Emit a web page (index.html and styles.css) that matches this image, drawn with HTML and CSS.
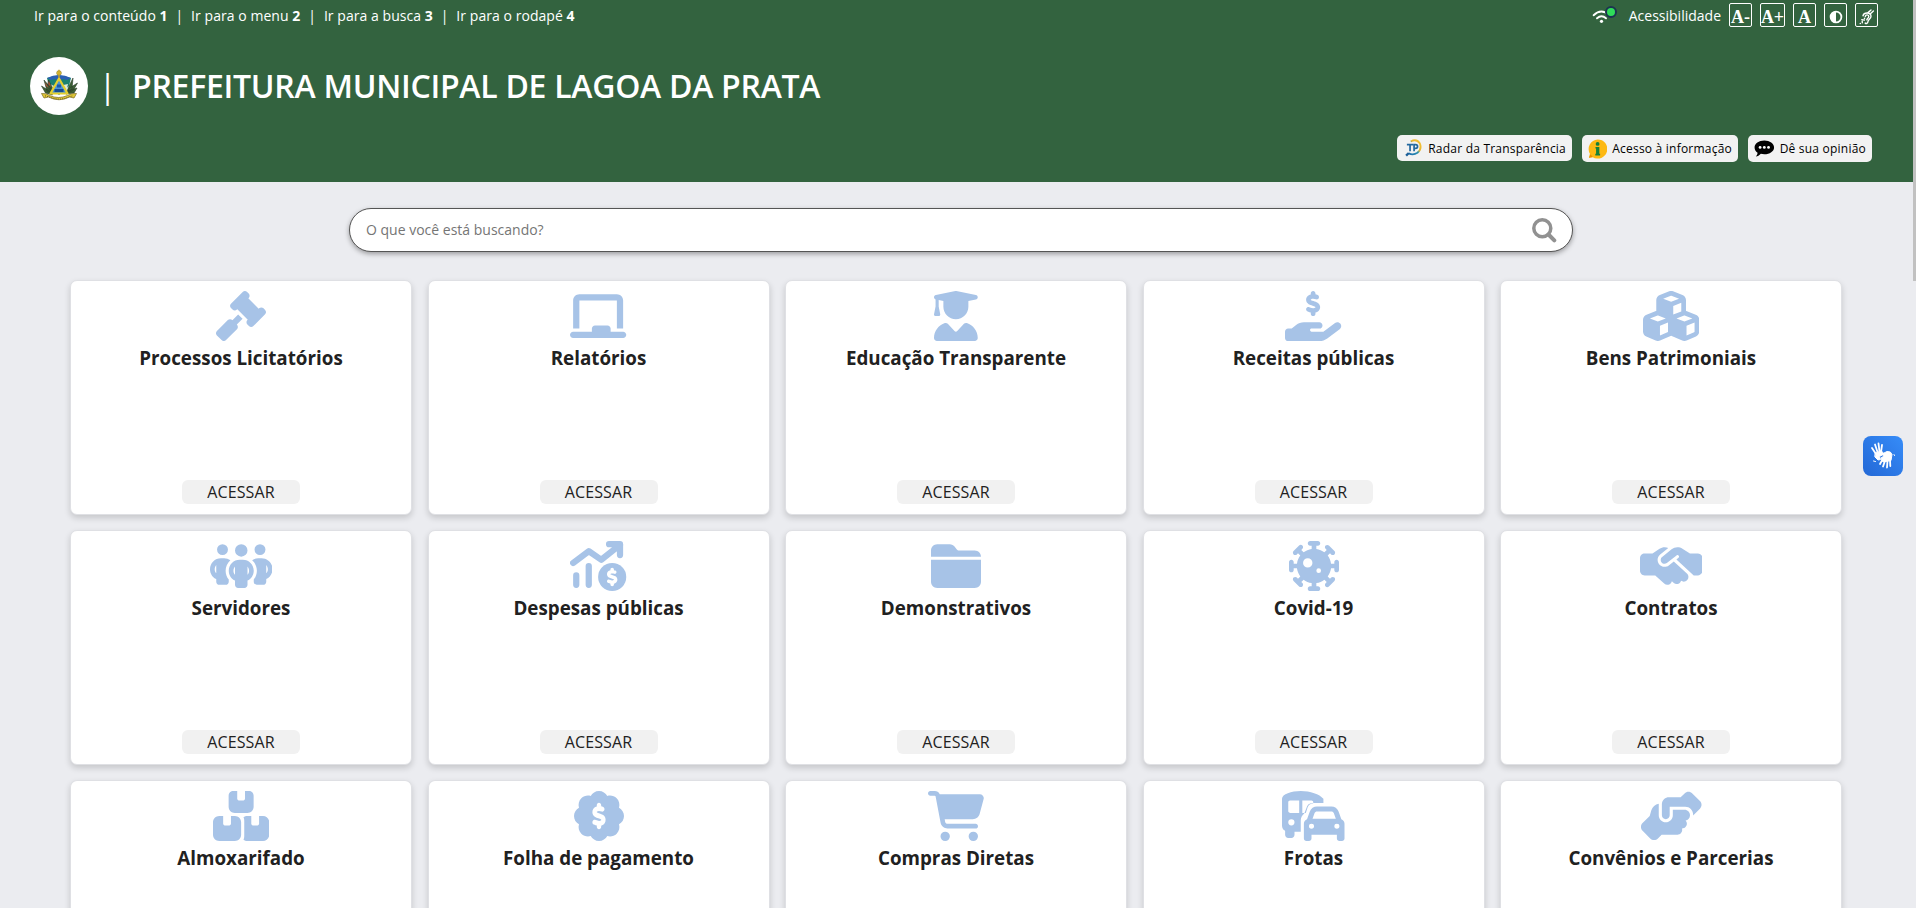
FILE: index.html
```html
<!DOCTYPE html>
<html lang="pt-BR">
<head>
<meta charset="utf-8">
<title>Portal da Transparência</title>
<link rel="stylesheet" href="styles.css">
</head>
<body>
<svg width="0" height="0" class="defs"><defs>
<path id="dollar" d="M312 24V34.5c6.4 1.2 12.6 2.7 18.2 4.2c12.8 3.4 20.4 16.6 17 29.4s-16.6 20.4-29.4 17c-10.9-2.9-21.1-4.9-30.2-5c-7.3-.1-14.7 1.7-19.4 4.4c-2.1 1.3-3.1 2.4-3.5 3c-.3 .5-.7 1.2-.7 2.8c0 .3 0 .5 0 .6c.2 .2 .9 1.2 3.3 2.6c5.8 3.5 14.4 6.2 27.4 10.1l.9 .3c11.1 3.3 25.9 7.8 37.9 15.3c13.7 8.6 26.1 22.9 26.4 44.9c.3 22.5-11.4 38.9-26.7 48.5c-6.7 4.1-13.9 7-21.3 8.8V232c0 13.3-10.7 24-24 24s-24-10.7-24-24V220.6c-9.5-2.3-18.2-5.3-25.6-7.8c-2.1-.7-4.1-1.4-6-2c-12.6-4.2-19.4-17.8-15.2-30.4s17.8-19.4 30.4-15.2c2.6 .9 5 1.7 7.3 2.5c13.6 4.6 23.4 7.9 33.9 8.3c8 .3 15.1-1.6 19.2-4.1c1.9-1.2 2.8-2.2 3.2-2.9c.4-.6 .9-1.8 .8-4.1l0-.2c0-1 0-2.1-4-4.6c-5.7-3.6-14.3-6.4-27.1-10.3l-1.9-.6c-10.8-3.2-25-7.5-36.4-14.4c-13.5-8.1-26.5-22-26.6-44.1c-.1-22.9 12.9-38.6 27.7-47.4c6.4-3.8 13.3-6.4 20.2-8.2V24c0-13.3 10.7-24 24-24s24 10.7 24 24z"/>
<linearGradient id="ring" x1="0" y1="1" x2="1" y2="0"><stop offset="0" stop-color="#1d6fae"/><stop offset=".45" stop-color="#2a8fb0"/><stop offset=".6" stop-color="#e8b62c"/><stop offset="1" stop-color="#f4c33a"/></linearGradient>
</defs></svg>
<header class="header">
  <div class="topbar">
    <nav class="skip"><a>Ir para o conteúdo <b>1</b></a><i>|</i><a>Ir para o menu <b>2</b></a><i>|</i><a>Ir para a busca <b>3</b></a><i>|</i><a>Ir para o rodapé <b>4</b></a></nav>
    <div class="access">
      <svg class="wifi" width="26" height="20" viewBox="0 0 26 20"><g fill="none" stroke="#fff" stroke-width="1.900" stroke-linecap="round"><path d="M1.600 10.200Q9.500 3 17 10.200"/><path d="M5 13.300Q9.500 9.400 14 13.300"/></g><circle cx="9.500" cy="16.300" r="1.600" fill="#fff"/><circle cx="19" cy="7" r="5" fill="#2fdc5a" stroke="#1c3450" stroke-width="2"/></svg>
      <span class="label">Acessibilidade</span>
      <span class="tool">A-</span><span class="tool wide">A+</span><span class="tool">A</span>
      <span class="tool"><svg width="14" height="14" viewBox="0 0 14 14"><circle cx="7" cy="7" r="5.400" fill="none" stroke="#fff" stroke-width="1.800"/><path d="M7 1.500a5.500 5.500 0 0 0 0 11z" fill="#fff"/></svg></span>
      <span class="tool"><svg width="16" height="16" viewBox="0 0 16 16" fill="none" stroke="#fff" stroke-width="1.400" stroke-linecap="round"><path d="M4 6.800C5 3 11.800 3 12 7.200c0 3-2.800 3-3 5.300-.2 1.900-1.800 2.400-2.800 1.600"/><path d="M6.300 7.600c.4-2.400 3.500-2.200 3.500 0 0 1.400-1.700 1.600-2 3.200"/><path d="M1.200 14.600l.2-.2M3.300 13.800l-.1-1.600M2.800 10.600l2.600.5M5.400 9.200l.2.200M9 3.600l3-2.600M11.400 4.800l3-2.800"/></svg></span>
    </div>
  </div>
  <div class="brand">
    <div class="crest"><svg width="38" height="34" viewBox="0 0 38 34">
      <path d="M7 9q12-5 24 0l-2 8-10 9L9 17z" fill="#1c8270"/><path d="M7 9q12-6 24 0l-4 2-4-1-4 2-4-2-4 1z" fill="#2b5fb4"/>
      <path d="M10 15q5 3 9 2t9-2l-2 8H12z" fill="#dfe8d8"/>
      <g fill="#3a5f34" stroke="#2b3d28" stroke-width=".6"><path d="M4 11l6 7 3 7-6-3zM1.500 17l8 5 3 4-7-2zM8.500 11l4 8-1 4-4-6z"/><path d="M33 9l-4 8-3 8 6-5zM37.500 14l-8 5-3 6 7-4zM37 19l-9 3-2 3 8-1z"/></g>
      <path d="M5 13l4 6-3-2zM9 12l2 6-3-3z" fill="#a8503c"/>
      <path d="M19 9.500L10.500 24.500h17z" fill="#4b93d4" stroke="#e4cf2e" stroke-width="2.200" stroke-linejoin="round"/><path d="M14.500 23h9v-3h-9z" fill="#174c92"/><path d="M17 15.500h4v3h-4z" fill="#1f5aa8"/>
      <circle cx="19" cy="4" r="2.300" fill="#e9c936" stroke="#8a7522" stroke-width=".7"/><path d="M19 .8v8" stroke="#c9a62a" stroke-width="1.400"/>
      <path d="M1.500 24.500q5-.5 8 2 9 4 18 0 4-2.500 9-2l-2.500 4.500-4.500-1q-10.500 5.500-21 0l-4.500 1z" fill="#e0c838" stroke="#7a6a24" stroke-width=".7"/><path d="M5 26.800l4 1.100q10 4.300 20 0l4-1.100" fill="none" stroke="#6c5c1d" stroke-dasharray="1 1.200"/></svg></div>
    <span class="bar">|</span><h1>PREFEITURA MUNICIPAL DE LAGOA DA PRATA</h1>
  </div>
  <div class="links">
    <a class="link radar"><svg width="20" height="20" viewBox="0 0 20 20" fill="none"><path d="M7 3.200Q13-.2 16.400 5q2.600 6-2.400 10-4.500 3-9 .6" stroke="url(#ring)" stroke-width="1.900"/><path d="M5 15.200L2.200 18" stroke="#1d5f98" stroke-width="2.400"/><path d="M3 6.500h6.500M6.300 6.500V13.500M10.500 13.500V6.500h1.600a1.900 1.900 0 0 1 0 4h-1.600" stroke="#24699f" stroke-width="1.800"/></svg>Radar da Transparência</a>
    <a class="link info"><svg width="20" height="20" viewBox="0 0 20 20"><path d="M10 0a10 10 0 1 1-5 18.600L1 19l1-4A10 10 0 0 1 10 0z" fill="#fdb913"/><path d="M1 19l1.500-3.500L5 18.400z" fill="#e89000"/><circle cx="10" cy="4.700" r="2" fill="#14803a"/><path d="M7.800 8h4v7h.8v1.700H7.600V15h.8V9.600h-.6z" fill="#14803a"/></svg>Acesso à informação</a>
    <a class="link op"><svg width="22" height="19" viewBox="0 0 22 19"><path d="M11 1c5.800 0 10.400 3.200 10.400 7.300S16.800 15.600 11 15.600c-1.300 0-2.600-.2-3.700-.5C5.700 16.800 3.800 18 2 18c1.200-1.300 1.700-2.600 1.800-4C1.800 12.700.6 10.600.6 8.300.6 4.200 5.200 1 11 1z"/><g fill="#fff"><circle cx="6.500" cy="8.300" r="1.500"/><circle cx="11" cy="8.300" r="1.500"/><circle cx="15.500" cy="8.300" r="1.500"/></g></svg>Dê sua opinião</a>
  </div>
</header>
<main>
  <div class="search"><span>O que você está buscando?</span><svg width="25" height="25" viewBox="0 0 25 25" fill="none" stroke="#919191"><circle cx="10.300" cy="10.300" r="8.500" stroke-width="3.500"/><path d="M16.500 16.500l5.800 5.800" stroke-width="4" stroke-linecap="round"/></svg></div>
  <div class="grid">
    <article class="card"><svg class="ico" viewBox="0 0 512 512"><path d="M318.600 9.400c-12.500-12.500-32.800-12.500-45.300 0l-120 120c-12.500 12.500-12.500 32.800 0 45.300l16 16c12.500 12.500 32.800 12.500 45.300 0l4-4L325.400 293.400l-4 4c-12.500 12.500-12.500 32.800 0 45.300l16 16c12.500 12.500 32.800 12.500 45.300 0l120-120c12.500-12.500 12.500-32.800 0-45.300l-16-16c-12.500-12.500-32.800-12.500-45.300 0l-4 4L330.600 74.600l4-4c12.500-12.500 12.500-32.800 0-45.300l-16-16zm-152 288c-12.500-12.500-32.800-12.500-45.300 0l-112 112c-12.500 12.500-12.500 32.800 0 45.300l48 48c12.500 12.500 32.800 12.500 45.300 0l112-112c12.500-12.500 12.500-32.800 0-45.300l-1.400-1.400L272 285.300 226.700 240 168 298.700l-1.400-1.400z"/></svg><h2>Processos Licitatórios</h2><a>ACESSAR</a></article>
    <article class="card"><svg class="ico" viewBox="0 0 576 512"><path d="M96 32C60.700 32 32 60.700 32 96V384H96V96l384 0V384h64V96c0-35.300-28.700-64-64-64H96zM224 384v32H32c-17.700 0-32 14.300-32 32s14.300 32 32 32H544c17.700 0 32-14.300 32-32s-14.300-32-32-32H416V384c0-17.700-14.300-32-32-32H256c-17.700 0-32 14.300-32 32z"/></svg><h2>Relatórios</h2><a>ACESSAR</a></article>
    <article class="card"><svg class="ico" viewBox="0 0 448 512"><path d="M219.300 .5c3.100-.6 6.300-.6 9.400 0l200 40C439.900 42.700 448 52.600 448 64s-8.100 21.300-19.300 23.500L352 102.900V160c0 70.700-57.300 128-128 128s-128-57.300-128-128V102.900L48 93.300v65.100l15.700 78.400c.9 4.700-.3 9.600-3.300 13.300s-7.600 5.900-12.400 5.900H16c-4.800 0-9.300-2.100-12.400-5.900s-4.300-8.600-3.300-13.300L16 158.400V86.600C6.500 83.300 0 74.300 0 64C0 52.600 8.100 42.700 19.300 40.500l200-40zM111.900 327.700c10.500-3.400 21.800 .4 29.400 8.500l71 75.500c6.300 6.700 17 6.700 23.300 0l71-75.500c7.600-8.100 18.900-11.900 29.400-8.500C401 348.600 448 409.400 448 481.300c0 17-13.800 30.700-30.700 30.700H30.700C13.800 512 0 498.200 0 481.300c0-71.900 47-132.700 111.900-153.600z"/></svg><h2>Educação Transparente</h2><a>ACESSAR</a></article>
    <article class="card"><svg class="ico" viewBox="0 0 576 512"><use href="#dollar"/><path d="M568.200 336.300c13.100 17.800 9.300 42.800-8.500 55.900L433.100 485.500c-23.400 17.200-51.600 26.500-80.700 26.500H32c-17.700 0-32-14.300-32-32V416c0-17.700 14.300-32 32-32H68.800l44.900-36c22.700-18.200 50.900-28 80-28H352c17.700 0 32 14.300 32 32s-14.300 32-32 32H272c-8.800 0-16 7.200-16 16s7.200 16 16 16H392.600l119.700-88.200c17.800-13.100 42.800-9.300 55.900 8.500z"/></svg><h2>Receitas públicas</h2><a>ACESSAR</a></article>
    <article class="card"><svg class="ico" viewBox="0 0 576 512"><path d="M290.800 48.600l78.400 29.700L288 109.500 206.800 78.300l78.400-29.700c1.800-.7 3.800-.7 5.700 0zM136 92.500V204.700c-1.300 .4-2.600 .8-3.900 1.300l-96 36.400C14.400 250.600 0 271.500 0 294.700V413.900c0 22.200 13.100 42.300 33.500 51.300l96 42.200c14.400 6.300 30.700 6.300 45.100 0L288 457.500l113.500 49.900c14.400 6.300 30.700 6.300 45.100 0l96-42.200c20.300-8.900 33.500-29.100 33.500-51.300V294.700c0-23.300-14.400-44.100-36.100-52.400l-96-36.400c-1.300-.5-2.600-.9-3.900-1.300V92.500c0-23.300-14.400-44.100-36.100-52.400l-96-36.400c-12.800-4.800-26.900-4.800-39.700 0l-96 36.400C150.400 48.400 136 69.300 136 92.500zM392 210.600l-82.400 31.200V152.600L392 121v89.600zM154.800 250.900l78.400 29.700L152 311.700 70.800 280.600l78.400-29.700c1.800-.7 3.800-.7 5.700 0zm18.800 204.400V354.800L256 323.200v95.900l-82.400 36.200zM421.200 250.900c1.800-.7 3.800-.7 5.700 0l78.400 29.700L424 311.700l-81.200-31.100 78.400-29.700zM523.200 421.200l-77.600 34.100V354.800L528 323.200v90.700c0 3.200-1.900 6-4.800 7.300z"/></svg><h2>Bens Patrimoniais</h2><a>ACESSAR</a></article>

    <article class="card"><svg class="ico" viewBox="0 0 640 512"><path d="M72 88a56 56 0 1 1 112 0A56 56 0 1 1 72 88zM64 245.700C54 256.900 48 271.800 48 288s6 31.100 16 42.300V245.700zm144.400-49.300C178.700 222.700 160 261.200 160 304c0 34.300 12 65.800 32 90.500V416c0 17.700-14.300 32-32 32H96c-17.700 0-32-14.300-32-32V389.200C26.200 371.200 0 332.700 0 288c0-61.900 50.100-112 112-112h32c24 0 46.200 7.500 64.400 20.300zM448 416V394.500c20-24.700 32-56.200 32-90.500c0-42.800-18.700-81.300-48.400-107.700C449.800 183.500 472 176 496 176h32c61.900 0 112 50.100 112 112c0 44.700-26.200 83.200-64 101.200V416c0 17.700-14.300 32-32 32H480c-17.700 0-32-14.300-32-32zm8-328a56 56 0 1 1 112 0A56 56 0 1 1 456 88zM576 245.700v84.700c10-11.300 16-26.100 16-42.300s-6-31.100-16-42.300zM320 32a64 64 0 1 1 0 128 64 64 0 1 1 0-128zM240 304c0 16.200 6 31 16 42.300V261.700c-10 11.300-16 26.100-16 42.300zm144-42.300v84.700c10-11.300 16-26.100 16-42.300s-6-31.100-16-42.300zM448 304c0 44.700-26.200 83.200-64 101.200V448c0 17.700-14.300 32-32 32H288c-17.700 0-32-14.300-32-32V405.200c-37.800-18-64-56.500-64-101.200c0-61.900 50.100-112 112-112h32c61.900 0 112 50.100 112 112z"/></svg><h2>Servidores</h2><a>ACESSAR</a></article>
    <article class="card"><svg class="ico" viewBox="0 0 576 512"><g fill="none" stroke="#a7c3e7" stroke-width="64" stroke-linecap="round" stroke-linejoin="round"><path d="M32 224L192 104l128 88L512 40M400 32h112v112M64 352v96M192 256v192"/></g><path d="M410 32h102v100z"/><circle cx="432" cy="368" r="144"/><use href="#dollar" fill="#fff" transform="translate(432 368) scale(.74) translate(-288 -128)"/></svg><h2>Despesas públicas</h2><a>ACESSAR</a></article>
    <article class="card"><svg class="ico" viewBox="0 0 512 512"><path d="M448 480H64c-35.300 0-64-28.700-64-64V192H512V416c0 35.300-28.700 64-64 64zm64-320H0V96C0 60.700 28.700 32 64 32H192c20.100 0 39.100 9.500 51.200 25.600l19.200 25.600c6 8.100 15.500 12.800 25.600 12.800H448c35.300 0 64 28.700 64 64z"/></svg><h2>Demonstrativos</h2><a>ACESSAR</a></article>
    <article class="card"><svg class="ico" viewBox="0 0 512 512"><path d="M192 24c0-13.300 10.700-24 24-24h80c13.300 0 24 10.700 24 24s-10.700 24-24 24H280V81.600c30.700 4.200 58.800 16.300 82.300 34.100L386.100 92 374.800 80.600c-9.400-9.400-9.400-24.600 0-33.900s24.600-9.400 33.900 0l56.600 56.600c9.400 9.400 9.400 24.600 0 33.900s-24.600 9.400-33.900 0L420 125.900l-23.800 23.800c17.900 23.500 29.900 51.700 34.100 82.300H464V216c0-13.300 10.700-24 24-24s24 10.700 24 24v80c0 13.300-10.700 24-24 24s-24-10.700-24-24V280H430.400c-4.200 30.700-16.300 58.800-34.100 82.300L420 386.100l11.300-11.300c9.400-9.400 24.600-9.400 33.900 0s9.400 24.600 0 33.900l-56.600 56.600c-9.400 9.400-24.600 9.400-33.900 0s-9.400-24.600 0-33.900L386.100 420l-23.800-23.800c-23.500 17.900-51.700 29.900-82.300 34.100V464h16c13.300 0 24 10.700 24 24s-10.700 24-24 24H216c-13.300 0-24-10.700-24-24s10.700-24 24-24h16V430.400c-30.700-4.200-58.800-16.300-82.300-34.100L125.900 420l11.300 11.300c9.400 9.400 9.400 24.600 0 33.900s-24.600 9.400-33.900 0L46.700 408.700c-9.400-9.400-9.400-24.600 0-33.900s24.600-9.400 33.900 0L92 386.100l23.800-23.800C97.900 338.800 85.800 310.700 81.600 280H48v16c0 13.300-10.700 24-24 24s-24-10.700-24-24V216c0-13.300 10.700-24 24-24s24 10.700 24 24v16H81.600c4.200-30.700 16.300-58.800 34.100-82.300L92 125.900 80.600 137.200c-9.400 9.400-24.600 9.400-33.900 0s-9.400-24.600 0-33.900l56.600-56.600c9.400-9.400 24.600-9.400 33.900 0s9.400 24.600 0 33.900L125.900 92l23.800 23.800c23.500-17.900 51.700-29.900 82.300-34.100V48H216c-13.300 0-24-10.700-24-24zm48 200a48 48 0 1 0-96 0 48 48 0 1 0 96 0zm64 104a24 24 0 1 0 0-48 24 24 0 1 0 0 48z"/></svg><h2>Covid-19</h2><a>ACESSAR</a></article>
    <article class="card"><svg class="ico" viewBox="0 0 640 512"><path d="M323.400 85.200l-96.800 78.400c-16.100 13-19.200 36.400-7 53.100c12.900 17.800 38 21.300 55.300 7.800l99.300-77.200c7-5.400 17-4.200 22.500 2.800s4.200 17-2.800 22.500l-20.900 16.200L550.200 352H592c26.500 0 48-21.500 48-48V176c0-26.500-21.500-48-48-48H516h-4-.7l-3.900-2.500L434.800 79c-15.300-9.800-33.200-15-51.400-15c-21.800 0-43 7.500-60 21.200zm22.800 124.400l-51.700 40.200C263 274.300 217.300 268 193.700 235.600c-22.200-30.500-16.600-73.100 12.700-96.800l83.200-67.300c-11.600-4.900-24.100-7.400-36.800-7.400C234 64 215.700 69.600 200 80l-72 48H48c-26.500 0-48 21.500-48 48V304c0 26.500 21.500 48 48 48H156.200l91.400 83.400c19.600 17.900 49.900 16.500 67.800-3.100c5.500-6.100 9.200-13.200 11.100-20.600l17 15.600c19.500 17.900 49.900 16.600 67.800-2.900c4.500-4.900 7.800-10.600 9.900-16.500c19.400 13 45.800 10.300 62.100-7.500c17.900-19.500 16.600-49.900-2.900-67.800l-134.200-123z"/></svg><h2>Contratos</h2><a>ACESSAR</a></article>

    <article class="card"><svg class="ico" viewBox="0 0 576 512"><path d="M248 0H208c-26.500 0-48 21.500-48 48V160c0 35.300 28.700 64 64 64H352c35.300 0 64-28.700 64-64V48c0-26.500-21.500-48-48-48H328V80c0 8.800-7.200 16-16 16H264c-8.800 0-16-7.200-16-16V0zM64 256c-35.300 0-64 28.700-64 64V448c0 35.300 28.700 64 64 64H224c35.300 0 64-28.700 64-64V320c0-35.300-28.700-64-64-64H184v80c0 8.800-7.200 16-16 16H120c-8.800 0-16-7.200-16-16V256H64zM352 512H512c35.300 0 64-28.700 64-64V320c0-35.300-28.700-64-64-64H472v80c0 8.800-7.200 16-16 16H408c-8.800 0-16-7.200-16-16V256H352c-15 0-28.800 5.100-39.700 13.800c4.900 10.400 7.700 22 7.700 34.200V464c0 12.200-2.800 23.800-7.700 34.200C323.200 506.900 337 512 352 512z"/></svg><h2>Almoxarifado</h2></article>
    <article class="card"><svg class="ico" viewBox="0 0 512 512"><path d="M256 0c36.800 0 68.800 20.700 84.900 51.100C373.800 41 411 49 437 75s34 63.300 23.900 96.100C491.300 187.200 512 219.200 512 256s-20.700 68.800-51.100 84.900C471 373.800 463 411 437 437s-63.300 34-96.100 23.900C324.800 491.300 292.800 512 256 512s-68.800-20.700-84.900-51.100C138.200 471 101 463 75 437s-34-63.300-23.900-96.100C20.700 324.800 0 292.800 0 256s20.700-68.800 51.100-84.900C41 138.200 49 101 75 75s63.300-34 96.100-23.900C187.200 20.700 219.200 0 256 0z"/><use href="#dollar" fill="#fff" transform="translate(256 256) scale(.94 1.060) translate(-288 -128)"/></svg><h2>Folha de pagamento</h2></article>
    <article class="card"><svg class="ico" viewBox="0 0 576 512"><path d="M0 24C0 10.700 10.700 0 24 0H69.500c22 0 41.500 12.800 50.600 32h411c26.300 0 45.500 25 38.600 50.400l-41 152.300c-8.500 31.400-37 53.300-69.500 53.300H170.700l5.400 28.500c2.200 11.300 12.100 19.500 23.600 19.500H488c13.300 0 24 10.700 24 24s-10.700 24-24 24H199.700c-34.600 0-64.300-24.600-70.700-58.500L77.400 54.500c-.7-3.800-4-6.500-7.900-6.500H24C10.700 48 0 37.300 0 24zM128 464a48 48 0 1 1 96 0 48 48 0 1 1 -96 0zm336-48a48 48 0 1 1 0 96 48 48 0 1 1 0-96z"/></svg><h2>Compras Diretas</h2></article>
    <article class="card"><svg class="ico" viewBox="0 0 640 512"><path fill-rule="evenodd" d="M192 0C96 0 0 32 0 80v272c0 24 12 44 32 55v41c0 18 14 32 32 32h32c18 0 32-14 32-32v-32h64V304c0-31 14-57 36-74l30-76c16-28 44-30 74-30h92V80C384 32 288 0 192 0zM82 96h94v128H82c-10 0-18-8-18-18v-92c0-10 8-18 18-18zM208 96h94c10 0 18 8 18 18v12c-30 4-48 16-58 42l-18 56h-36zM96 288a32 32 0 1 1 0 64 32 32 0 1 1 0-64z"/><path transform="translate(224 134) scale(.8125 .7875)" d="M135.200 117.400L109.100 192H402.900l-26.100-74.600C372.300 104.600 360.200 96 346.600 96H165.400c-13.600 0-25.700 8.600-30.200 21.400zM39.600 196.800L74.800 96.300C88.300 57.800 124.600 32 165.400 32H346.600c40.800 0 77.100 25.800 90.600 64.300l35.200 100.500c23.200 9.600 39.600 32.500 39.600 59.200V448c0 17.700-14.300 32-32 32H448c-17.700 0-32-14.300-32-32V400H96v48c0 17.700-14.300 32-32 32H32c-17.700 0-32-14.300-32-32V256c0-26.700 16.400-49.600 39.600-59.200zM128 288a32 32 0 1 0-64 0 32 32 0 1 0 64 0zm288 32a32 32 0 1 0 0-64 32 32 0 1 0 0 64z"/></svg><h2>Frotas</h2></article>
    <article class="card"><svg class="ico" viewBox="0 0 640 512"><path d="M544 248v3.300l69.700-69.700c21.900-21.900 21.900-57.300 0-79.200L535.600 24.400c-21.900-21.900-57.300-21.900-79.200 0L416.300 64.500c-2.700-.3-5.500-.5-8.300-.5H296c-37.100 0-67.600 28-71.600 64H224V248c0 22.100 17.900 40 40 40s40-17.900 40-40V160l160 0c44.200 0 80 35.800 80 80v8zM336 192v56c0 39.800-32.200 72-72 72s-72-32.200-72-72V129.400c-35.900 6.200-65.800 32.300-76 68.200L99.500 255.200 26.300 328.400c-21.900 21.900-21.900 57.300 0 79.200l78.100 78.100c21.900 21.900 57.300 21.900 79.200 0l37.700-37.700c.9 0 1.800 .1 2.700 .1H384c26.500 0 48-21.500 48-48c0-5.600-1-11-2.700-16H432c26.500 0 48-21.500 48-48c0-12.800-5-24.400-13.200-33c25.700-5 45.100-27.600 45.200-54.800v-.4c-.1-30.800-25.100-55.800-56-55.800l-120 0z"/></svg><h2>Convênios e Parcerias</h2></article>
  </div>
</main>
<div class="libras"><svg width="26" height="28" viewBox="0 0 26 28" fill="none" stroke="#fff" stroke-width="1.800" stroke-linecap="round"><path d="M6 12L2 6M7.500 10L5 2.500M9.500 10L8.500 1.500M11 10l1-7"/><path d="M5.500 11l6-2 2.500 3-4.500 2.500 1 3-2.500.5-3-3z" fill="#fff" stroke-width="1"/><path d="M12 12l5-2.500q4-.5 5 3l-1 6-8 1.500-2-4 3-2z" fill="#fff" stroke-width="1"/><path d="M12.500 17.500L10 22M15 19l-2 5.500M17.500 19l-.5 6.500M20 18l.3 6"/><path d="M3.500 19l2 .5M24 12.500l.5 1" stroke-width="1"/></svg></div>
<div class="scroll"></div>
</body>
</html>
```

FILE: styles.css
```css
* { box-sizing: border-box; }
body { margin: 0; height: 908px; overflow: hidden; background: #ebecf0; font-family: "Open Sans", "Noto Sans", sans-serif; color: #212121; }
.defs { position: absolute; }
.header { width: 1913px; height: 182px; background: #33633f; color: #fff; }
.topbar { display: flex; justify-content: space-between; height: 32px; padding: 0 35px 0 34px; font-size: 14px; line-height: 32px; }
.skip { display: flex; letter-spacing: .05px; }
.skip i { font-style: normal; width: 23.5px; text-align: center; }
.skip b { font-weight: 700; }
.access { display: flex; align-items: flex-start; padding-top: 3px; }
.wifi { margin-top: 2px; margin-right: 11px; }
.label { line-height: 26px; margin-right: 8px; }
.tool { display: flex; align-items: center; justify-content: center; width: 23px; height: 24px; border: 1px solid #fff; border-radius: 2px; margin-right: 8px; font: 700 18px/22px "Liberation Serif", serif; padding-top: 3px; }
.tool.wide { width: 25px; }
.tool:last-child { margin-right: 0; }
.brand { display: flex; align-items: center; height: 60px; margin-top: 24px; padding-left: 30px; }
.crest { width: 58px; height: 58px; border-radius: 50%; background: #fff; display: flex; align-items: center; justify-content: center; }
.bar { width: 39px; text-align: center; font-size: 32px; line-height: 44px; }
h1 { margin: 0 0 0 5px; font-size: 32px; line-height: 44px; font-weight: 600; letter-spacing: -.27px; }
.links { display: flex; justify-content: flex-end; gap: 10px; margin-top: 19px; padding-right: 41px; }
.link { display: flex; align-items: center; gap: 5px; height: 27px; padding: 0 6px; border-radius: 5px; background: #f2f2f2; color: #000; font-size: 12px; letter-spacing: .22px; white-space: nowrap; }
.radar { width: 175px; height: 26px; padding-left: 7px; }
.info { width: 156px; }
.op { width: 124px; }
main { width: 1913px; height: 726px; overflow: hidden; }
.search { display: flex; align-items: center; justify-content: space-between; width: 1224px; height: 44px; margin: 26px 0 0 349px; padding: 0 15px 0 16px; background: #fff; border: 1px solid #555; border-radius: 22px; box-shadow: 0 2px 5px rgba(0,0,0,.35); color: #757575; font-size: 14px; }
.search span { padding-bottom: 2px; }
.grid { display: grid; grid-template-columns: repeat(5, 342px); column-gap: 15.5px; row-gap: 15px; width: 1772px; margin: 28px 0 0 70px; }
.card { height: 235px; display: flex; flex-direction: column; align-items: center; background: #fff; border: 1px solid #dfe0e4; border-radius: 7px; box-shadow: 0 3px 6px rgba(0,0,0,.16); padding-top: 10px; }
.card:nth-child(n+11) { height: 143px; border-bottom: 0; border-radius: 7px 7px 0 0; }
.ico { display: block; height: 50px; fill: #a7c3e7; }
h2 { margin: 4px 0 0; font-size: 18.8px; line-height: 26px; font-weight: 700; }
.card a { margin-top: auto; margin-bottom: 10px; width: 118px; height: 24px; border-radius: 6px; background: #f1f1f1; text-align: center; font-size: 16px; line-height: 24px; letter-spacing: .15px; }
.libras { position: absolute; left: 1863px; top: 436px; width: 40px; height: 40px; border-radius: 8px; background: linear-gradient(45deg, #2368d6, #368cf8); display: flex; align-items: center; justify-content: center; }
.scroll { position: absolute; right: 0; top: 0; width: 3px; height: 281px; background: #c1c1c1; }
```
